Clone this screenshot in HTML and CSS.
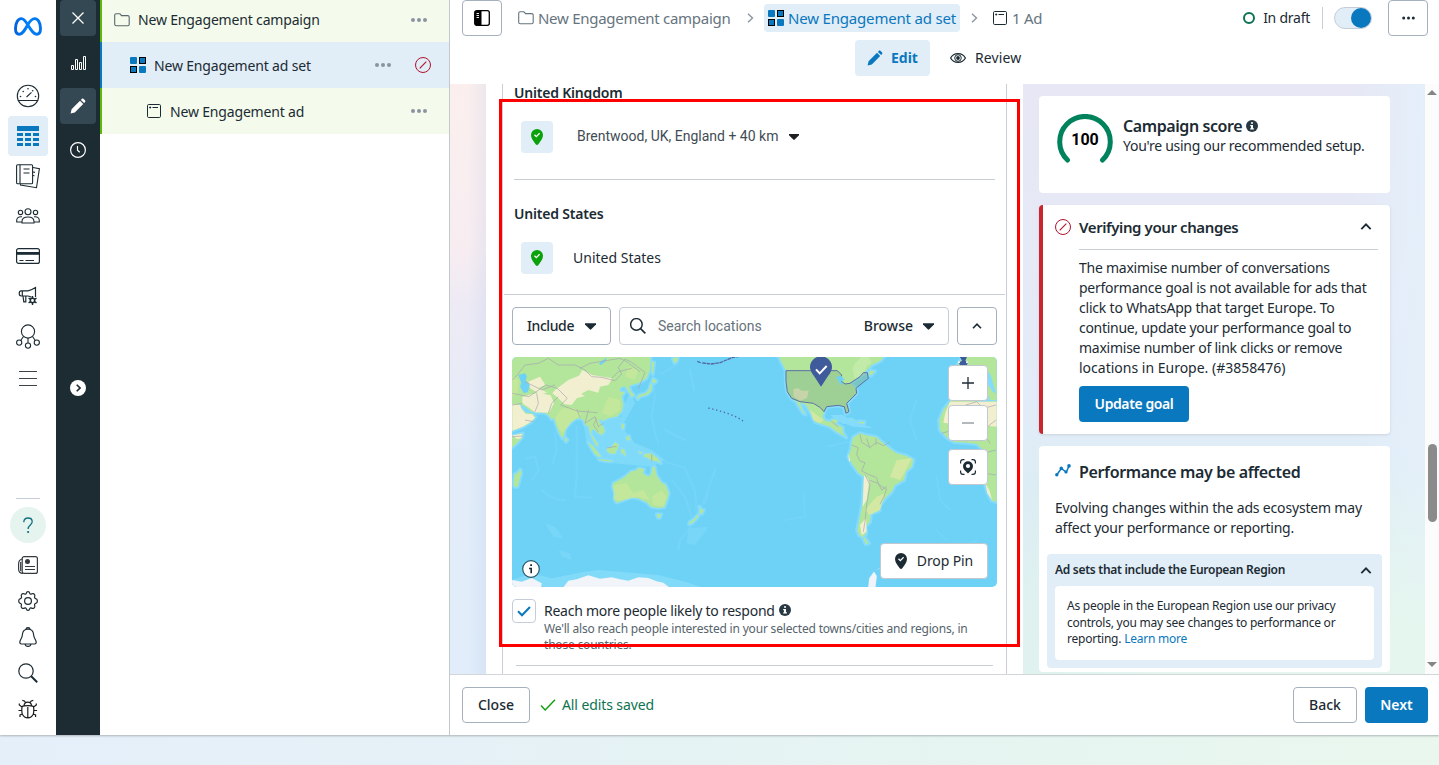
FILE: index.html
```html
<!DOCTYPE html>
<html lang="en">
<head>
<meta charset="utf-8">
<title>Ads Manager</title>
<link rel="stylesheet" href="styles.css">
</head>
<body>
<svg width="0" height="0" class="defs">
  <defs>
    <linearGradient id="metaBlue" x1="0" x2="1"><stop offset="0" stop-color="#0064e1"/><stop offset=".5" stop-color="#0082fb"/><stop offset="1" stop-color="#0073ee"/></linearGradient>
    <symbol id="i-folder" viewBox="0 0 16 16"><path d="M.7 3.2c0-.9.6-1.5 1.5-1.5h3.2c.6 0 .9.2 1.2.7l.8 1.2h6.300c.9 0 1.500.6 1.500 1.500v7.200c0 .9-.6 1.500-1.500 1.500H2.200c-.9 0-1.500-.6-1.500-1.500z" fill="none" stroke="currentColor" stroke-width="1.100"/></symbol>
    <symbol id="i-grid" viewBox="0 0 16 16"><rect width="7" height="7" rx="1" fill="#0a78be"/><rect x="9" y="9" width="7" height="7" rx="1" fill="#0a78be"/><rect x="9.500" y=".5" width="6" height="6" fill="#0a78be" stroke="#000"/><rect x=".5" y="9.500" width="6" height="6" fill="#0a78be" stroke="#000"/></symbol>
    <symbol id="i-ad" viewBox="0 0 14 14"><rect x=".5" y=".5" width="13" height="13" rx="1.200" fill="none" stroke="#1c2b33"/><path d="M2.200 3.500h2M3.200 2.500v2M5.500 3.500H11" stroke="#1c2b33"/></symbol>
    <symbol id="i-block" viewBox="0 0 16 16"><circle cx="8" cy="8" r="7.500" fill="none" stroke="#b3122d"/><path d="M4.700 11.300l6.600-6.600" stroke="#b3122d" stroke-width="1.100"/></symbol>
    <symbol id="i-pencil" viewBox="0 0 16 16"><path d="M.6 15.400l1-4.200L10 2.800l3.200 3.200-8.400 8.400zM10.900 1.900l.8-.8c.7-.7 1.400-.6 2 0l1.200 1.200c.6.6.7 1.300 0 2l-.8.8z" fill="currentColor"/></symbol>
    <symbol id="i-dots" viewBox="0 0 16 4"><circle cx="2" cy="2" r="2" fill="currentColor"/><circle cx="8" cy="2" r="2" fill="currentColor"/><circle cx="14" cy="2" r="2" fill="currentColor"/></symbol>
    <symbol id="i-pin" viewBox="0 0 12 16"><path d="M6 0a6 6 0 0 1 6 6c0 3.600-2.600 6.300-4.700 9.200q-1.300 1.500-2.600 0C2.600 12.300 0 9.600 0 6a6 6 0 0 1 6-6z" fill="currentColor"/><path d="M3.500 5.800l1.800 1.800 3.300-3.300" fill="none" stroke="#fff" stroke-width="1.300"/></symbol>
    <symbol id="i-down" viewBox="0 0 10 6"><path d="M0 0h10v1.200L5.700 5.600q-.7.700-1.400 0L0 1.200z" fill="currentColor"/></symbol>
    <symbol id="i-up" viewBox="0 0 10 6"><path d="M1 5.200l4-4 4 4" fill="none" stroke="currentColor" stroke-width="1.600"/></symbol>
    <symbol id="i-info" viewBox="0 0 12 12"><circle cx="6" cy="6" r="6" fill="#283943"/><path d="M5 2.300h2v1.500H5zM4.200 5H7v3.300h.9v1.200H4.200V8.300H5V6.200h-.8z" fill="#fff"/></symbol>
    <symbol id="i-search" viewBox="0 0 20 20"><circle cx="8" cy="8" r="7.200" fill="none" stroke="currentColor" stroke-width="var(--sw,1.200)"/><path d="M13.200 13.200l6 6" stroke="currentColor" stroke-width="2"/></symbol>
  </defs>
</svg>
<div class="app">
  <nav class="nav">
    <svg class="logo" width="28" height="19" viewBox="0 0 28 19"><path d="M14 8.200C11.600 4 9.800 1.600 7.300 1.600 4 1.600 1.500 6.200 1.500 11.400c0 3.600 1.400 5.800 3.900 5.800 3 0 5-3.600 8.600-9.800C16 4 17.900 1.600 20.700 1.600c3.400 0 5.800 4.600 5.800 9.800 0 3.600-1.400 5.800-3.900 5.800-3 0-4.900-3.200-8.600-9" fill="none" stroke="url(#metaBlue)" stroke-width="2.900"/></svg>
    <div class="nav-top">
      <a class="nav-item"><svg width="24" height="24" viewBox="0 0 24 24"><g fill="none" stroke="#1c2b33" stroke-width="1.100"><circle cx="12" cy="12" r="10.700"/><path d="M1.800 16.500h20.400M10.500 13l5-4.600"/></g><g fill="#1c2b33"><circle cx="4.500" cy="12.500" r=".8"/><circle cx="7.200" cy="7.500" r=".8"/><circle cx="12" cy="4.800" r=".8"/><circle cx="16.700" cy="6.800" r=".8"/><circle cx="19.500" cy="12.500" r=".8"/></g></svg></a>
      <a class="nav-item on"><svg width="24" height="22" viewBox="0 0 24 22"><path fill="#0a78be" d="M1 1h22v5H1zM1 8h6v3H1zM9 8h6v3H9zM17 8h6v3h-6zM1 13h6v3H1zM9 13h6v3H9zM17 13h6v3h-6zM1 18h6v3H1zM9 18h6v3H9zM17 18h6v3h-6z"/></svg></a>
      <a class="nav-item"><svg width="24" height="25" viewBox="0 0 24 25"><g fill="none" stroke="#1c2b33" stroke-width="1.100"><rect x=".6" y=".8" width="16" height="19" rx="1"/><path d="M4 .8v19M7.500 5h6M7.500 9h6M17 3.500l6.400 1.200-2.900 19L4.500 21v-1M17 8l2 .4M17 11.500l1.500.3"/></g></svg></a>
      <a class="nav-item"><svg width="24" height="16" viewBox="0 0 24 16"><g fill="none" stroke="#1c2b33" stroke-width="1.100"><circle cx="12" cy="3.800" r="3"/><circle cx="4.500" cy="4.400" r="2.200"/><circle cx="19.500" cy="4.400" r="2.200"/><path d="M6 15v-1.500c0-3 2-4.500 6-4.500s6 1.500 6 4.500V15zM6 14H.7v-1.500c0-2.500 1.500-4 5.300-3.700M18 14h5.300v-1.500c0-2.500-1.500-4-5.300-3.700"/></g></svg></a>
      <a class="nav-item"><svg width="24" height="16" viewBox="0 0 24 16"><rect x=".6" y=".6" width="22.800" height="14.800" rx="2" fill="none" stroke="#1c2b33" stroke-width="1.200"/><path d="M.6 4h22.800v2.800H.6z" fill="#1c2b33"/><path d="M3.500 12.500h4M9.500 12.500H18" stroke="#1c2b33"/></svg></a>
      <a class="nav-item"><svg width="20" height="20" viewBox="0 0 20 20"><g fill="none" stroke="#1c2b33" stroke-width="1.200"><path d="M17.500 11V1.500c-2 1.300-4.800 3-7.500 3.300H3.200c-1.200 0-2 1-2 2.500s.8 2.700 2 2.700H10c1.300.2 2.400.6 3.500 1.200M4.300 4.800V10M5 10l.8 5.800h2V10"/><circle cx="14.500" cy="14.500" r="2.200" stroke-width="1.500"/><path d="M14.500 10v2.500M14.500 16.500V19M10.600 12.200l2 1.200M16.500 15.600l2 1.200M10.600 16.800l2-1.200M16.500 13.400l2-1.200" stroke-width="1.400"/></g></svg></a>
      <a class="nav-item"><svg width="24" height="25" viewBox="0 0 24 25"><g fill="none" stroke="#1c2b33" stroke-width="1.100"><circle cx="12" cy="7.500" r="6.600"/><circle cx="3.200" cy="18.600" r="2.600"/><circle cx="12" cy="21.600" r="2.600"/><circle cx="20.800" cy="18.600" r="2.600"/><path d="M7.500 12.500l-2.800 4M12 14v5M16.500 12.500l2.800 4"/></g></svg></a>
      <a class="nav-item menu"><svg width="18" height="16" viewBox="0 0 18 16"><path d="M0 1.500h18M0 8.500h18M0 15.500h18" stroke="#3b444a"/></svg></a>
    </div>
    <div class="nav-bottom">
      <a class="help"><svg width="10" height="17" viewBox="0 0 10 17"><path d="M.8 5.200C.8 2.500 2.400 1 5 1s4.200 1.500 4.200 3.800c0 3.300-4.100 3.200-4.100 7.200" fill="none" stroke="#11707f" stroke-width="1.300"/><circle cx="5.100" cy="15" r="1.100" fill="#11707f"/></svg></a>
      <a><svg width="20" height="18" viewBox="0 0 20 18"><g fill="none" stroke="#333b40" stroke-width="1.200"><rect x="4.200" y=".6" width="15.200" height="16.800" rx="2"/><path d="M4.200 3C1.500 3.500.6 5 .6 8v5c0 3 1.500 4.400 4.500 4.400M2.700 6v9M7 10.500h10M7 13.500h10"/></g><circle cx="9.500" cy="5.500" r="2.500" fill="#333b40"/></svg></a>
      <a><svg width="20" height="20" viewBox="0 0 20 20"><g fill="none" stroke="#1c2b33" stroke-width="1.200"><path d="M10 .7c1 0 1.500.4 1.700 1.400.2 1 .8 1.300 1.500 1 .9-.5 1.700-.7 2.800-.2 1 .9 1.200 1.500.7 2.500-.5 1 0 2 1 2.200 1.200.3 1.700.9 1.700 2.400s-.5 2.100-1.700 2.400c-1 .2-1.500 1.200-1 2.200.5 1 .3 1.600-.7 2.500-1.100.5-1.900.3-2.800-.2-.7-.3-1.300 0-1.500 1-.2 1-.7 1.400-1.700 1.400s-1.500-.4-1.700-1.400c-.2-1-.8-1.300-1.500-1-.9.500-1.700.7-2.800.2-1-.9-1.200-1.500-.7-2.500.5-1 0-2-1-2.200C1.200 12.100.7 11.500.7 10s.5-2.100 1.700-2.400c1-.2 1.400-1.200 1-2.200-.5-1-.3-1.600.7-2.500 1.100-.5 1.900-.3 2.800.2.700.3 1.300 0 1.500-1C8.500 1.100 9 .7 10 .7z"/><circle cx="10" cy="10" r="3.400"/></g></svg></a>
      <a><svg width="18" height="20" viewBox="0 0 18 20"><g fill="none" stroke="#1c2b33" stroke-width="1.200"><path d="M9 2.200c-3.500 0-5.500 2.600-5.700 6C3.100 11.500.8 13 .8 15.300c0 1.200.5 1.700 1.500 1.700h13.400c1 0 1.500-.5 1.500-1.700 0-2.300-2.300-3.800-2.500-7.100-.2-3.400-2.200-6-5.700-6zM6.800 2.500C7 1.300 7.800.7 9 .7s2 .6 2.200 1.800M6 17c.3 1.600 1.300 2.400 3 2.400s2.700-.8 3-2.400"/></g></svg></a>
      <a><svg width="20" height="20"><use href="#i-search"/></svg></a>
      <a><svg width="20" height="20" viewBox="0 0 20 20"><g fill="none" stroke="#1c1c1c" stroke-width="1.200"><path d="M4.200 7.500c1.500-1.200 9.700-1.200 11.200 0 .6 1.500.6 6-.3 8-1 2-3 3.300-5.300 3.300S5.500 17.500 4.500 15.500c-.9-2-.9-6.500-.3-8zM6 6.700C6.300 4.500 7.500 3.200 9.800 3.200s3.500 1.300 3.800 3.500M9.800 8v10.800M7.500 3.500C7 2 5.500 1.300 4.300 1.300M12.100 3.500c.5-1.500 2-2.200 3.200-2.200M4 8L1.300 6V4.500M15.600 8l2.700-2V4.500M3.800 11.500H.5M15.800 11.500h3.300M4.500 15l-2.500 1V18M15.100 15l2.500 1V18"/></g></svg></a>
    </div>
  </nav>
  <aside class="rail">
    <a class="tile first"><svg width="12" height="12" viewBox="0 0 12 12"><path d="M.5.500l11 11M11.500.500L.5 11.500" stroke="#fff" stroke-width="1.300"/></svg></a>
    <a class="tile plain"><svg width="16" height="15" viewBox="0 0 16 15"><path d="M1.500 10.500h2v4h-2zM5.500 4.500h2v10h-2zM9.500 7.500h2v7h-2zM13.500 1.500h2v13h-2z" fill="none" stroke="#fff"/></svg></a>
    <a class="tile"><svg width="16" height="16"><use href="#i-pencil"/></svg></a>
    <a class="tile plain"><svg width="16" height="16" viewBox="0 0 16 16"><circle cx="8" cy="8" r="7.400" fill="none" stroke="#fff" stroke-width="1.200"/><path d="M7.500 4v4.200l2.300 2" fill="none" stroke="#fff" stroke-width="1.200"/></svg></a>
    <a class="expand"><svg width="5" height="8" viewBox="0 0 5 8"><path d="M.7.700L4 4 .7 7.300" fill="none" stroke="#1c2b33" stroke-width="1.600"/></svg></a>
  </aside>
  <section class="tree">
    <div class="row r1"><svg width="16" height="16"><use href="#i-folder"/></svg><span class="t">New Engagement campaign</span><svg class="dots" width="16" height="4"><use href="#i-dots"/></svg></div>
    <div class="row r2"><svg width="16" height="16"><use href="#i-grid"/></svg><span class="t">New Engagement ad set</span><svg class="dots" width="16" height="4"><use href="#i-dots"/></svg><svg class="stop" width="16" height="16"><use href="#i-block"/></svg></div>
    <div class="row r3"><svg width="14" height="14"><use href="#i-ad"/></svg><span class="t">New Engagement ad</span><svg class="dots" width="16" height="4"><use href="#i-dots"/></svg></div>
  </section>
  <main class="main">
    <header class="head">
      <div class="crumbs">
        <a class="btn panel-btn"><svg width="16" height="16" viewBox="0 0 16 16"><rect x=".7" y=".7" width="14.600" height="14.600" rx="2" fill="none" stroke="#000" stroke-width="1.300"/><path d="M1 1h6.500v14H1z"/><path d="M2.500 3.500h2.500M2.500 5.500h2.500M2.500 7.500h2.500" stroke="#fff" stroke-width=".9"/></svg></a>
        <a class="crumb c1"><svg width="16" height="16"><use href="#i-folder"/></svg><span>New Engagement campaign</span></a>
        <svg class="sep" width="7" height="10" viewBox="0 0 7 10"><path d="M1 .7L5.500 5 1 9.300" fill="none" stroke="#8b96a0" stroke-width="1.400"/></svg>
        <a class="crumb c2"><svg width="16" height="16"><use href="#i-grid"/></svg><span>New Engagement ad set</span></a>
        <svg class="sep s2" width="7" height="10" viewBox="0 0 7 10"><path d="M1 .7L5.500 5 1 9.300" fill="none" stroke="#8b96a0" stroke-width="1.400"/></svg>
        <a class="crumb c3"><svg width="14" height="14"><use href="#i-ad"/></svg><span>1 Ad</span></a>
        <div class="status"><i class="ring"></i><span>In draft</span><i class="bar"></i><i class="toggle"><b></b></i></div>
        <a class="btn more"><svg width="13" height="4" viewBox="0 0 13 4"><g fill="#1c2b33"><circle cx="1.700" cy="2" r="1.500"/><circle cx="6.500" cy="2" r="1.500"/><circle cx="11.300" cy="2" r="1.500"/></g></svg></a>
      </div>
      <div class="tabs">
        <a class="tab edit"><svg width="16" height="16"><use href="#i-pencil"/></svg><span>Edit</span></a>
        <a class="tab review"><svg width="16" height="10" viewBox="0 0 16 10"><path d="M.6 5C2 2.300 4.700.6 8 .6s6 1.700 7.400 4.400C14 7.700 11.300 9.400 8 9.400S2 7.700.6 5z" fill="none" stroke="#1c2b33" stroke-width="1.200"/><circle cx="8" cy="5" r="3.300" fill="none" stroke="#1c2b33"/><circle cx="8" cy="5" r="1.900" fill="#1c2b33"/></svg><span>Review</span></a>
      </div>
    </header>
    <div class="content">
      <div class="form">
        <div class="box">
          <h4 class="uk">United Kingdom</h4>
          <div class="loc brent"><i class="chip"><svg width="12" height="16"><use href="#i-pin"/></svg></i><span>Brentwood, UK, England + 40 km</span><svg class="car" width="10" height="6"><use href="#i-down"/></svg></div>
          <hr class="h1">
          <h4 class="us">United States</h4>
          <div class="loc usa"><i class="chip"><svg width="12" height="16"><use href="#i-pin"/></svg></i><span>United States</span></div>
          <hr class="h2">
          <div class="find">
            <a class="btn incl"><span>Include</span><svg width="11" height="7"><use href="#i-down"/></svg></a>
            <div class="search"><svg class="mag" width="16" height="16"><use href="#i-search"/></svg><span class="ph">Search locations</span><span class="br">Browse</span><svg width="11" height="7"><use href="#i-down"/></svg></div>
            <a class="btn fold"><svg width="10" height="6"><use href="#i-up"/></svg></a>
          </div>
          <div class="map">
            <svg width="485" height="230" viewBox="0 0 485 230">
              <defs>
                <filter id="rough" x="-5%" y="-5%" width="110%" height="110%"><feTurbulence type="fractalNoise" baseFrequency=".22" numOctaves="2" seed="4"/><feDisplacementMap in="SourceGraphic" scale="3.500" xChannelSelector="R" yChannelSelector="G"/></filter>
                <g id="landA">
                  <path d="M18 18H437L435 60 425 85 400 100 380 105 372 108 378 125 388 135 380 142 374 130 368 120 358 108 345 115 345 125 360 125 350 140 355 165 350 185 335 200 310 205 296 212 285 208 283 215 295 230 300 245 290 255 280 250 270 240 262 238 258 248 265 262 278 280 280 290 272 285 264 270 256 250 250 228 240 225 235 210 225 205 212 207 200 215 188 228 180 240 178 255 172 265 163 250 150 215 148 205 140 208 130 195 118 188 90 187 80 185 60 170 45 163 50 175 62 188 80 190 92 200 80 215 55 230 18 244Z"/>
                  <path d="M18 258L54 250 50 265 36 280 18 295ZM46 358L49 370 44 390 38 410 28 411 25 398 29 372 38 368ZM182 262l6 8-5 6-4-6Z"/>
                  <path d="M249 277L262 286 276 302 288 318 284 322 270 312 258 294ZM284 327l20 2 18 3-3 3-22-2-14-4ZM306 295L320 290 330 276 342 284 337 298 330 312 312 310 305 302ZM350 296l8 2 2 10 3 8-5 1-4-8-5 4-1-12ZM350 220l8 4-2 12-4 2-3-10ZM362 262l10-4 4 12-8 2ZM403 304l10 4-4 4-8-4ZM418 312l20-2 20 14 10 16-12-6-16-2-12-8-12-4Z"/>
                  <path d="M445 85l10 8-6 7-9-3ZM441 100l-2 22-12 12-14 4-10 4-4 6-4-4 8-10 18-4 10-10 6-18ZM440 35l8 2-4 36-4-8ZM503 25l16-4-3 14-8 4Z"/>
                  <path d="M324 400L350 386 360 380 378 364 392 362 400 354 418 357 414 370 430 380 438 374 442 352 449 349 455 376 470 398 482 404 492 430 486 450 478 472 458 474 438 470 424 456 414 452 404 446 380 442 352 452 334 458 328 448 332 432 323 412ZM455 492l14 1-5 11-6-1ZM583 470l5 8 9 2-6 12-8-4 2-8ZM579 493l2 5-10 12-10 10-9 3 1-6 14-10Z"/>
                </g>
                <g id="landB">
                  <path d="M86 18H402L392 32 365 45 345 66 325 82 300 100 318 115 320 130 300 150 290 160 297 185 288 190 283 170 265 166 230 170 222 185 218 200 225 212 240 215 250 208 265 210 256 222 277 232 279 248 288 262 278 255 260 245 240 230 215 222 195 215 183 190 166 163 150 158 158 180 166 193 160 190 146 168 140 155 125 145 112 125 108 95 108 62 96 40ZM360 62l15 2-12 12-8-2ZM278 215l24-6 16 8-14 2-12-4ZM325 215l18 1-2 5-14-1Z"/>
                  <path d="M310 262L330 250 345 255 380 262 400 280 425 300 440 310 470 318 490 330 485 350 468 365 462 390 435 405 425 425 405 445 390 465 388 482 362 490 360 515 345 530 348 550 340 562 328 556 322 540 330 500 338 460 340 420 342 380 325 368 305 340 295 320 302 300 305 280ZM342 560l14 20-8 2-8-16Z"/>
                  <path d="M602 152L640 150 700 156 740 152V455L726 452 712 425 705 400 712 350 700 300 680 282 650 278 612 276 590 262 570 240 568 210 580 180ZM640 80L612 60 640 20H740V150H716L700 148 690 140 650 145 605 145 600 110Z"/>
                </g>
              </defs>
              <rect width="485" height="230" fill="#6ed2f7"/>
              <g transform="translate(-7 -7) scale(.33333)">
                <g filter="url(#rough)" fill="none" stroke="#7ad7fa" stroke-width="6" stroke-linecap="round" opacity=".65"><path d="M440 60l10 80-10 60 10 50 10 30M150 250l5 50-12 40M65 325l25-5 12 40-20 30M215 230v150l-5 60 50 3M110 420q30 30 70 30M480 335l60 20 30 70 5 60M500 390l40 50 20 60M630 360q-20 60-40 110M555 60l12 60M480 240l60 30M520 600l5-30 40-50M470 70l45-25M610 430l-10 30"/></g>
                <g fill="#7fd9f9" opacity=".6"><path d="M550 535l60-5-20 30-20 25-25-5ZM120 520l30 10 25 35-30-5ZM160 600l35 10 5 20-30-10Z"/></g>
                <path filter="url(#rough)" d="M235 215L350 200 355 170 375 130 390 160 350 230 390 280 440 300 480 330 440 350 380 345 280 335 245 280Z" fill="#7fd9f9"/>
                <path d="M20 690l60-20 60 15 100-20 40-5 180 15 80 20 60 20H20z" fill="#82daf9"/>
                <use href="#landA" fill="none" stroke="#84dbfb" stroke-width="11" stroke-linejoin="round"/>
                <use href="#landA" filter="url(#rough)" fill="#b3e69b"/>
                <path d="M150 205l20-30 40 0 20 20-30 20-25 35-12-10ZM325 405l40-5 20 30 30-10 20 30-40-8-50 10-20-5ZM440 440l30-20 15 20-10 30-30-5ZM310 140l35 10 0 30-25 18-30-8ZM22 80l20 10-5 40-15 10ZM370 50l30 10-10 30-30-10Z" fill="#cdea9c" opacity=".6"/>
                <g filter="url(#rough)" fill="#f2efd0"><path d="M150 120L190 90 222 77 232 60 262 75 322 85 310 105 285 110 280 128 250 120 228 132 240 138 215 145 200 165 178 162 160 145 142 130ZM70 95l35-15 16 25-20 8 25 15-20 5-30-18ZM52 140l45-12 40 8 10 24-15 28-42-1-20-15-18-12ZM22 163l23 2 5 12 12 14 20 2 8 10-12 12-25 15-31 12ZM22 256l30-5-4 14-12 2Z"/></g>
                <path d="M40 75l20-5 6 8-4 14 12 12-5 22-12 4-12-20 4-12ZM282 40l24-18-6 14-14 10Z" fill="#6ed2f7"/>
                <g filter="url(#rough)" fill="none" stroke="#a6a2b4" stroke-width="2.300" opacity=".85" stroke-linejoin="round"><path d="M40 70l20-25 40-5 30-15 30 20 50 0 30 15 20 20 30 2 40 10 20-20-10-20 20-25 20 10 40 30-20 50M225 55l30-15 30-5 60-10 20 10 40 30M22 130l50 10 50-35 35 10 30 30-20 20 50 18 60 5M130 190l10-30 20-20M60 95l50 25 40-15M250 180l-10 40 30-20 10 30 15-10M275 205l-10 20 15 20M22 165l30-5M60 210l25 5M440 312v24M305 294l30-5M22 90l20-20M22 260l30-2M95 130l5 30-10 25M215 178l10 24M320 85l20-20 40-10"/></g>
                <path filter="url(#rough)" d="M16 714L22 690 50 695 80 684 110 700 108 716ZM172 716L190 692 215 688 250 676 285 686 320 682 345 688 370 692 400 682 430 684 455 694 475 698 498 716Z" fill="#f1f4f8"/>
                <g stroke="#5466a0" stroke-width="4" fill="none"><path d="M577 34l12 5M592 39l26 3 28-4 18-8 20-8 20-3" stroke-dasharray="11 2"/><path d="M610 174l20 5 28 8 28 10 16 8 12 8" stroke-dasharray="4 8"/></g>
              </g>
              <g transform="translate(238 -7) scale(.33333)">
                <g filter="url(#rough)" fill="none" stroke="#7ad7fa" stroke-width="5" stroke-linecap="round" opacity=".55"><path d="M500 150l-20 60 20 60M560 380l10 70 30 30M160 430l5 70-60 10M230 290l70-15M560 540l30 30M620 600l60-30"/></g>
                <use href="#landB" fill="none" stroke="#84dbfb" stroke-width="13" stroke-linejoin="round"/>
                <use href="#landB" filter="url(#rough)" fill="#b3e69b"/>
                <path d="M240 195l40 0 20 15 30 10 40 15-60-5-40-15Z" fill="#84dbfb"/>
                <path d="M440 330l45-5-20 40-15 25-30-10ZM345 480l35-40 25-10-15 50-30 15ZM180 180l40 30-10 10-20-10Z" fill="#d3e8a2"/>
                <path filter="url(#rough)" d="M342 375l16 15-8 60-12 20ZM330 525l18-20 2 40-15 10ZM295 310l6 22-4 2ZM600 155h140v75l-60-6-50 0-50-6 6-30ZM706 400l12 20 8 30-14-20Z" fill="#f2efd0"/>
                <path d="M630 40l10-10 15 6-5 10ZM702 150l8-16 12 14ZM690 60l30 10 18 60-10-5-20-30Z" fill="#84dbfb"/>
                <path d="M315 40l20-20h20l10 18-15 10-10 25-25 15-8-30Z" fill="#c2eaa8"/>
                <path d="M108 62H262L275 75 272 92 285 102 300 100 330 80 340 68 352 68 355 85 330 105 318 115 320 130 300 150 290 160 297 185 288 190 283 170 265 166 230 170 222 185 210 172 190 160 150 155 125 145 112 125 108 95Z" fill="#86b58f" fill-opacity=".45" stroke="#5d6fa6" stroke-width="3"/>
                <path d="M130 118l14-4 10 8 22 0-5 22-20 8-20-12Z" fill="#d9d5b4" opacity=".7"/>
                <path d="M258 80l16-2 10 12-12 2 8 12-10-2Z" fill="#6ed2f7"/>
                <g filter="url(#rough)" fill="none" stroke="#a6a2b4" stroke-width="2.300" opacity=".85" stroke-linejoin="round"><path d="M330 252l5 25 25 15 20-15 20 10 20-10M305 285l20 8-5 20 10 20 15 5-10 25 20 10 25 10 5 20 25 15-10 25-10 20M345 375l15 30-10 60-5 50-5 30M355 390l30 10 10 20 15-10M350 265l10 30M378 265v20M600 180l80-25 20 20 38-10M640 250l30-20 30 10 38-30M650 275v-30M700 310l38-10M705 370l33 5M575 250l35-10M640 100l50 10 20-30M245 215l20 15M690 230l30 50"/></g>
                <path d="M355 712L358 685 372 665 380 678 376 712ZM380 660l10-6" fill="#f1f4f8" stroke="#f1f4f8"/>
                <path d="M213 110l-21-32q-12-14-12-26a33 33 0 0 1 66 0q0 12-12 26Z" fill="#3f5b9b"/><path d="M198 58l11 12 21-22" fill="none" stroke="#fff" stroke-width="6"/>
                <path d="M628 18h24l-6 14 8 6-4 8h-20l-4-8 10-6Z" fill="#3f5b9b"/><circle cx="627" cy="37" r="3" fill="#fff"/><circle cx="651" cy="37" r="3" fill="#fff"/>
              </g>
            </svg>
            <div class="ctrls">
              <a class="mb"><svg width="12" height="12" viewBox="0 0 12 12"><path d="M6 0v12M0 6h12" stroke="#1c2b33" stroke-width="1.300"/></svg></a>
              <a class="mb"><svg width="12" height="12" viewBox="0 0 12 12"><path d="M0 6h12" stroke="#99a0a6" stroke-width="1.300"/></svg></a>
              <a class="mb loc-b"><svg width="16" height="16" viewBox="0 0 16 16"><path d="M.6 4.500V3C.6 1.500 1.500.6 3 .6h1.500M11.500.6H13c1.500 0 2.400.9 2.400 2.400v1.500M15.400 11.500V13c0 1.500-.9 2.400-2.400 2.400h-1.500M4.500 15.400H3C1.500 15.400.6 14.500.6 13v-1.500" fill="none" stroke="#1c2b33" stroke-width="1.200"/><path d="M8 2.200a5 5 0 0 1 5 5c0 2.800-2.200 4.600-5 7.200-2.800-2.600-5-4.400-5-7.200a5 5 0 0 1 5-5z" fill="#1c2b33"/><circle cx="8" cy="7" r="2.100" fill="#fff"/></svg></a>
            </div>
            <a class="mb drop"><svg width="12" height="16"><use href="#i-pin"/></svg><span>Drop Pin</span></a>
            <a class="about"><svg width="18" height="18" viewBox="0 0 18 18"><circle cx="9" cy="9" r="8.300" fill="#fff" stroke="#2a5566" stroke-width="1.200"/><path d="M8.200 4.200h1.800v1.700H8.200zM7 7.800h3v5.500H8.400V9.200H7z" fill="#1c2b33"/></svg></a>
          </div>
          <div class="reach">
            <i class="check"><svg width="14" height="11" viewBox="0 0 14 11"><path d="M1 5.300l4 4L13 1" fill="none" stroke="#0a78be" stroke-width="2"/></svg></i>
            <div><p class="rt"><span>Reach more people likely to respond</span><svg width="12" height="12"><use href="#i-info"/></svg></p><p class="rs">We'll also reach people interested in your selected towns/cities and regions, in<br><span>those countries.</span></p></div>
          </div>
          <hr class="h3">
        </div>
        <div class="mark"></div>
      </div>
      <div class="side">
        <div class="card score">
          <div class="gauge"><svg width="56" height="56" viewBox="0 0 56 56"><path d="M10.500 46A25.300 25.300 0 1 1 45.500 46" fill="none" stroke="#00835c" stroke-width="5" stroke-linecap="round"/></svg><b>100</b></div>
          <div class="st"><p class="s1"><span>Campaign score</span><svg width="12" height="12"><use href="#i-info"/></svg></p><p class="s2t">You're using our recommended setup.</p></div>
        </div>
        <div class="card verify">
          <div class="vh"><svg width="16" height="16"><use href="#i-block"/></svg><span>Verifying your changes</span><svg class="u" width="12" height="7"><use href="#i-up"/></svg></div>
          <div class="vb"><p><span class="v1">The maximise number of conversations</span><br><span class="v2">performance goal is not available for ads that</span><br><span class="v3">click to WhatsApp that target Europe. To</span><br><span class="v4">continue, update your performance goal to</span><br><span class="v5">maximise number of link clicks or remove</span><br><span class="v6">locations in Europe. (#3858476)</span></p><a class="primary upd">Update goal</a></div>
        </div>
        <div class="card perf">
          <div class="ph2"><svg width="16" height="13" viewBox="0 0 16 13"><path d="M2 10.500l4.300-6 5 3.500L14 2" fill="none" stroke="#0a78be" stroke-width="1.500"/><g fill="#0a78be"><circle cx="1.800" cy="10.800" r="1.700"/><circle cx="6.300" cy="4.300" r="1.700"/><circle cx="11" cy="8" r="1.600"/><circle cx="14" cy="1.900" r="1.800"/></g></svg><span>Performance may be affected</span></div>
          <p class="pp"><span class="p1">Evolving changes within the ads ecosystem may</span><br><span class="p2">affect your performance or reporting.</span></p>
          <div class="region"><div class="rh"><span>Ad sets that include the European Region</span><svg width="12" height="7"><use href="#i-up"/></svg></div>
            <p class="note">As people in the European Region use our privacy<br>controls, you may see changes to performance or<br>reporting. <a>Learn more</a></p></div>
        </div>
      </div>
      <div class="scroll"><i class="au"></i><i class="thumb"></i><i class="ad"></i></div>
    </div>
    <footer class="foot">
      <a class="btn close">Close</a>
      <span class="saved"><svg width="16" height="12" viewBox="0 0 16 12"><path d="M1 6.500L5.200 11 15 .8" fill="none" stroke="#16a016" stroke-width="1.500"/></svg><span>All edits saved</span></span>
      <a class="btn back">Back</a><a class="primary next">Next</a>
    </footer>
  </main>
</div>
</body>
</html>
```
FILE: styles.css
```css
* { box-sizing: border-box; }
body { margin: 0; width: 1439px; height: 765px; overflow: hidden; font: 14px/20px "Noto Sans", sans-serif; color: #1c2b33; background: linear-gradient(90deg, #e5effa 0, #e5f1f6 32%, #e6f5f0 72%, #e9f7ee 100%); }
p, h4, hr { margin: 0; }
hr { border: 0; height: 1px; background: #c8ced6; }
svg { display: block; flex: none; }
i { font-style: normal; }
a { color: inherit; text-decoration: none; }
.defs { position: absolute; }
.app { display: flex; height: 735px; box-shadow: 0 1px 2px #aab3b8; background: #fff; }

.nav { width: 56px; display: flex; flex-direction: column; align-items: center; justify-content: space-between; }
.logo { margin-top: 17px; }
.nav-top { display: flex; flex-direction: column; margin-top: 40px; margin-bottom: auto; }
.nav-item { width: 40px; height: 40px; display: flex; align-items: center; justify-content: center; border-radius: 4px; }
.nav-item.on { background: #e1edf7; }
.nav-item.menu { padding-top: 3px; }
.nav-bottom { display: flex; flex-direction: column; align-items: center; width: 24px; border-top: 1px solid #c5ced8; padding-top: 8px; padding-bottom: 8px; }
.nav-bottom a { display: flex; width: 36px; height: 36px; align-items: center; justify-content: center; }
.nav-bottom .help { border-radius: 50%; background: #e5f4ef; margin-bottom: 4px; }

.rail { width: 44px; background: #1d2b33; color: #fff; display: flex; flex-direction: column; align-items: center; gap: 8px; }
.tile { width: 36px; height: 36px; border-radius: 4px; background: #344854; display: flex; align-items: center; justify-content: center; }
.tile.plain { background: none; }
.expand { width: 16px; height: 16px; border-radius: 50%; background: #fff; display: flex; align-items: center; justify-content: center; margin-top: 204px; }

.tree { width: 350px; border-right: 1px solid #c3c8cd; }
.row { height: 46px; display: flex; align-items: center; border-left: 2px solid #5db80c; background: #f4fbec; }
.row .t { margin-right: auto; letter-spacing: -.17px; padding-top: 2px; }
.r1 { height: 42px; padding: 0 22px 3px 12px; color: #1c2b33; }
.r1 svg:first-child { color: #5a676e; }
.row.r1 .t { margin-left: 8px; padding-top: 1px; }
.r2 { background: #e1edf7; border-color: #0a78be; padding: 0 18px 0 28px; }
.r2 .t { margin-left: 8px; }
.r3 { padding: 0 22px 0 45px; }
.r3 .t { margin-left: 9px; }
.dots { color: #8b93a1; }
.stop { margin-left: 24px; }

.main { flex: 1; display: flex; flex-direction: column; min-width: 0; }
.head { height: 84px; padding: 0 11px 0 12px; }
.crumbs { display: flex; align-items: center; height: 36px; font-size: 15px; }
.btn { border: 1px solid #a4b0be; border-radius: 4px; background: #fff; display: flex; align-items: center; justify-content: center; }
.panel-btn, .more { width: 40px; height: 36px; }
.crumb { display: flex; align-items: center; color: #66747e; white-space: nowrap; letter-spacing: -.28px; }
.c1 { margin-left: 16px; width: 213px; }
.c1 svg, .c2 svg, .c3 svg { margin-right: 4px; }
.sep { margin-left: 16px; }
.c2 { height: 28px; background: #e1edf7; border-radius: 4px; color: #0a78be; padding-left: 4px; width: 196px; margin-left: 10px; letter-spacing: -.18px; }
.s2 { margin-left: 11px; }
.c3 { margin-left: 15px; }
.c3 span { margin-left: 1px; }
.status { display: flex; align-items: center; margin-left: auto; font-size: 14px; letter-spacing: -.25px; }
.ring { width: 12px; height: 12px; border: 2px solid #0c7350; border-radius: 50%; margin-right: 8px; }
.bar { width: 1px; height: 22px; background: #c8ced6; margin: 0 11px 0 12px; }
.toggle { width: 38px; height: 22px; border-radius: 11px; border: 1px solid #c5ced8; background: #e1edf7; display: flex; justify-content: flex-end; }
.toggle b { width: 20px; height: 20px; border-radius: 50%; background: #0a78be; }
.more { margin-left: 16px; }
.tabs { display: flex; margin: 4px 0 0 393px; }
.tab { height: 36px; display: flex; align-items: center; }
.edit { width: 75px; border-radius: 4px; background: #e1edf7; color: #0a78be; font-weight: 700; padding-left: 12px; gap: 8px; }
.review { margin-left: 20px; gap: 9px; letter-spacing: .1px; }

.content { height: 590px; display: flex; overflow: hidden; background: linear-gradient(#fbefee 0, #f7edf1 28%, #edeaf5 38%, #e3edf9 62%, #e1edfa 100%) left / 36px 100% no-repeat, radial-gradient(ellipse 420px 230px at 850px 590px, #e5f6ee 30%, #e5f6ee00 100%), linear-gradient(90deg, #e4ebf800 900px, #e4effa 975px), linear-gradient(#e7e7f5 0, #e6e9f6 30%, #e2ecf8 55%, #dcedf4 70%, #d9eef0 100%); }
.form { position: relative; width: 537px; margin-left: 36px; background: #fff; padding: 0 16px; }
.form::before { content: ""; position: absolute; left: -18px; top: 0; width: 18px; height: 590px; background: linear-gradient(90deg, #8caadc00, #8caadc20); }
.box { height: 590px; width: 505px; border: solid #c8ced6; border-width: 0 1px; overflow: hidden; }
h4 { font-size: 14px; line-height: 20px; font-weight: 600; margin-left: 11px; letter-spacing: -.2px; }
.uk { margin-top: -1px; }
.loc { display: flex; align-items: center; height: 32px; margin-left: 18px; }
.brent { margin-top: 18px; font-family: Roboto, sans-serif; color: #3f4c54; }
.brent span { margin-left: 24px; padding-bottom: 2px; }
.brent .car { margin-left: 11px; color: #1c1e21; }
.chip { width: 32px; height: 32px; border-radius: 4px; background: #e1edf7; color: #0aa10a; display: flex; align-items: center; justify-content: center; }
.h1 { margin: 26px 11px 0; }
.us { margin-top: 24px; }
.usa { margin-top: 18px; }
.usa span { margin-left: 20px; }
.h2 { margin: 20px 1px 0; }
.find { display: flex; gap: 8px; margin: 12px 9px 0; height: 38px; }
.incl { width: 99px; gap: 11px; font-weight: 500; letter-spacing: -.4px; }
.search { width: 330px; border: 1px solid #c5ced8; border-radius: 4px; display: flex; align-items: center; padding: 0 14px 0 10px; }
.mag { --sw: 1.800; }
.ph { margin-left: 12px; font-family: Roboto, sans-serif; color: #66727b; }
.br { margin-left: auto; margin-right: 10px; font-weight: 500; }
.fold { width: 40px; }
.map { position: relative; width: 485px; height: 230px; margin: 12px 0 0 9px; border-radius: 5px; overflow: hidden; }
.mb { background: #fff; border: 1px solid #c1c8d0; border-radius: 4px; display: flex; align-items: center; justify-content: center; }
.ctrls { position: absolute; left: 436px; top: 8px; display: flex; flex-direction: column; gap: 4px; }
.ctrls .mb { width: 40px; height: 36px; }
.ctrls .loc-b { margin-top: 4px; }
.drop { position: absolute; left: 368px; top: 186px; width: 108px; height: 36px; gap: 10px; letter-spacing: -.1px; }
.about { position: absolute; left: 10px; top: 203px; }
.reach { display: flex; gap: 8px; margin: 12px 0 0 9px; }
.check { width: 24px; height: 24px; border: 1px solid #c5ced8; border-radius: 4px; display: flex; align-items: center; justify-content: center; flex: none; }
.rt { display: flex; align-items: center; gap: 4px; height: 22px; padding-top: 2px; white-space: nowrap; letter-spacing: -.25px; }
.rt svg { margin-bottom: 2px; }
.rs { font-size: 12px; line-height: 16px; color: #56646c; white-space: nowrap; letter-spacing: -.19px; }
.h3 { margin: 12px 13px 0; }
.mark { position: absolute; left: 13px; top: 15px; width: 521px; height: 548px; border: 3px solid #fe0000; }

.side { width: 351px; margin-left: 16px; padding-top: 12px; display: flex; flex-direction: column; gap: 12px; }
.card { background: #fff; border-radius: 4px; flex: none; }
.score { height: 97px; display: flex; padding: 18px 0 0 18px; }
.gauge { position: relative; width: 56px; height: 56px; }
.gauge b { position: absolute; left: 0; top: 16px; width: 56px; text-align: center; font: 700 16px/20px Roboto, sans-serif; color: #000; }
.st { margin-left: 10px; }
.s1 { display: flex; align-items: center; gap: 4px; font-size: 16px; font-weight: 600; line-height: 24px; height: 24px; white-space: nowrap; letter-spacing: -.42px; }
.s2t { line-height: 16px; white-space: nowrap; letter-spacing: -.28px; }
.verify { height: 229px; border-left: 4px solid #c9252d; box-shadow: 0 1px 3px #0000001c; }
.vh { display: flex; align-items: center; height: 44px; padding: 0 18px 1px 12px; font-weight: 600; font-size: 15px; letter-spacing: -.4px; }
.vh span { margin-left: 8px; }
.u { margin-left: auto; }
.vb { border-top: 1px solid #c8ced6; margin: 0 12px 0 36px; padding-top: 8px; white-space: nowrap; letter-spacing: -.25px; }
.v4 { letter-spacing: -.29px; }
.v3 { letter-spacing: -.2px; }
.v6 { letter-spacing: 0; }
.primary { display: flex; align-items: center; justify-content: center; background: #0a78be; color: #fff; font-weight: 600; border-radius: 4px; height: 36px; }
.upd { width: 110px; margin-top: 8px; letter-spacing: -.4px; }
.perf { height: 226px; padding: 14px 8px 0; }
.ph2 { display: flex; align-items: center; height: 24px; font-size: 16px; font-weight: 600; padding-left: 8px; white-space: nowrap; gap: 8px; letter-spacing: -.36px; }
.ph2 svg { margin-bottom: 4px; }
.pp { margin: 14px 0 0 8px; white-space: nowrap; }
.p1 { letter-spacing: -.18px; }
.p2 { letter-spacing: -.23px; }
.region { margin-top: 16px; height: 114px; border-radius: 4px; background: #e1edf7; padding: 6px 8px 8px; }
.rh { display: flex; align-items: center; justify-content: space-between; font-weight: 600; font-size: 12px; padding-right: 2px; height: 20px; letter-spacing: -.28px; }
.note { margin-top: 6px; height: 74px; border-radius: 4px; background: #fff; padding: 12px; font-size: 12px; line-height: 16.500px; white-space: nowrap; letter-spacing: -.23px; }
.note a { color: #0a78be; }
.scroll { margin-left: auto; width: 14px; background: #fcfcfc; display: flex; flex-direction: column; align-items: center; }
.au, .ad { border: 5px solid transparent; }
.au { border-width: 0 5px 5px; border-bottom-color: #858585; margin-top: 6px; }
.thumb { width: 9px; height: 78px; border-radius: 5px; background: #8b8b8b; margin-top: 349px; }
.ad { border-width: 5px 5px 0; border-top-color: #858585; margin-top: 140px; }

.foot { height: 61px; border-top: 1px solid #d3d6d9; display: flex; align-items: center; padding: 0 11px 0 12px; }
.foot .btn, .next { height: 36px; }
.close { width: 68px; font-weight: 500; }
.saved { display: flex; align-items: center; gap: 6px; margin-left: 10px; color: #0c7350; letter-spacing: -.1px; }
.back { width: 64px; margin-left: auto; font-weight: 500; }
.next { width: 63px; margin-left: 8px; }
```
